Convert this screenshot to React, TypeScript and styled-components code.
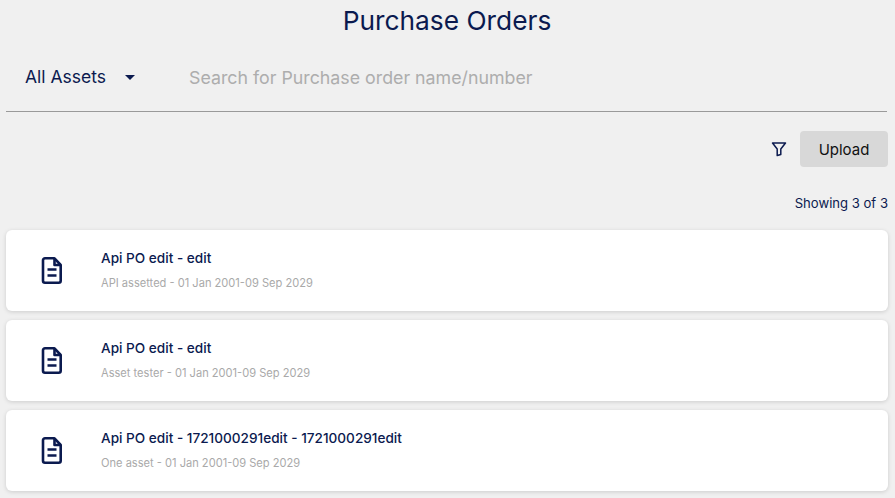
import React from "react";
import styled, { createGlobalStyle } from "styled-components";

const Global = createGlobalStyle`
  html, body { margin: 0; padding: 0; background: #f0f0f0; }
  body { font-family: Inter, "Noto Sans", sans-serif; color: #0b1a4f; }
`;

const Page = styled.div`
  width: 895px;
  height: 498px;
  overflow: hidden;
  box-sizing: border-box;
  padding: 0 7px 0 6px;
`;
const Title = styled.h1`
  margin: 0;
  height: 42px;
  line-height: 42px;
  font-size: 26.3px;
  font-weight: 400;
  text-align: center;
  color: #0b1a4f;
`;
const SearchBar = styled.div`
  display: flex;
  align-items: center;
  height: 69px;
  margin-right: 1px;
  border-bottom: 1px solid #9a9a9a;
  padding-left: 19px;
`;
const AssetSelect = styled.div`
  display: flex;
  align-items: center;
  width: 164px;
  font-size: 17.5px;
  color: #0b1a4f;
`;
const Caret = styled.span`
  margin-left: 19px;
  margin-top: 1px;
  width: 0;
  height: 0;
  border-left: 5.5px solid transparent;
  border-right: 5.5px solid transparent;
  border-top: 5.5px solid #0b1a4f;
`;
const SearchText = styled.div`
  font-size: 17.8px;
  padding-top: 2px;
  color: #adadad;
`;
const Actions = styled.div`
  display: flex;
  align-items: center;
  justify-content: flex-end;
  gap: 13px;
  margin-top: 19px;
`;
const FilterIcon = styled.svg`
  width: 16px;
  height: 16px;
  fill: none;
  stroke: #0b1a4f;
  stroke-width: 1.5;
  stroke-linejoin: round;
`;
const UploadButton = styled.button`
  width: 88px;
  height: 36px;
  border: 0;
  border-radius: 4px;
  background: #d8d8d8;
  color: #111;
  font: 400 15px Inter, sans-serif;
`;
const Count = styled.div`
  margin-top: 27px;
  height: 18px;
  line-height: 18px;
  text-align: right;
  font-size: 13.1px;
  color: #0b1a4f;
`;
const List = styled.div`
  display: flex;
  flex-direction: column;
  gap: 9px;
  margin-top: 18px;
`;
const Card = styled.div`
  display: flex;
  align-items: center;
  height: 81px;
  border-radius: 6px;
  background: #fff;
  box-shadow: 0 1px 4px rgba(0, 0, 0, 0.15);
`;
const DocIcon = styled.svg`
  width: 24px;
  height: 30px;
  margin-left: 34px;
  margin-right: 37px;
  flex: none;
  fill: none;
  stroke: #0b1a4f;
  stroke-width: 2.6;
  stroke-linejoin: round;
`;
const CardText = styled.div`
  display: flex;
  flex-direction: column;
  gap: 9px;
`;
const CardTitle = styled.div`
  font-size: 13.6px;
  line-height: 16px;
  font-weight: 500;
  color: #0b1a4f;
`;
const CardMeta = styled.div`
  font-size: 11.1px;
  line-height: 16px;
  color: #a9a9a9;
`;

const orders = [
  { title: "Api PO edit - edit", meta: "API assetted - 01 Jan 2001-09 Sep 2029" },
  { title: "Api PO edit - edit", meta: "Asset tester - 01 Jan 2001-09 Sep 2029" },
  { title: "Api PO edit - 1721000291edit - 1721000291edit", meta: "One asset - 01 Jan 2001-09 Sep 2029" },
];

export default function App() {
  return (
    <Page>
      <Global />
      <Title>Purchase Orders</Title>
      <SearchBar>
        <AssetSelect>All Assets<Caret /></AssetSelect>
        <SearchText>Search for Purchase order name/number</SearchText>
      </SearchBar>
      <Actions>
        <FilterIcon viewBox="0 0 16 16"><path d="M1.5 2h13L9.8 8v5.5L6.2 14.5V8z" /></FilterIcon>
        <UploadButton>Upload</UploadButton>
      </Actions>
      <Count>Showing 3 of 3</Count>
      <List>
        {orders.map((o, i) => (
          <Card key={i}>
            <DocIcon viewBox="0 0 24 30">
              <path d="M5 2.3h9.5l6.2 6.7v15.7a2 2 0 0 1-2 2H5a2 2 0 0 1-2-2V4.3a2 2 0 0 1 2-2z" />
              <path d="M14.5 2.3V9h6.2M7.5 13.5h9M7.5 19.5h9" />
            </DocIcon>
            <CardText>
              <CardTitle>{o.title}</CardTitle>
              <CardMeta>{o.meta}</CardMeta>
            </CardText>
          </Card>
        ))}
      </List>
    </Page>
  );
}
